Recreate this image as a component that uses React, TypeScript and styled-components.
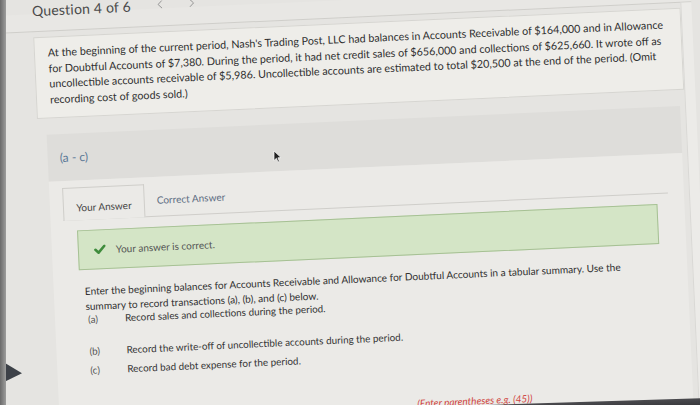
import React from 'react'
import styled, { createGlobalStyle } from 'styled-components'
import { ChevronLeft, ChevronRight } from 'lucide-react'

const GlobalStyle = createGlobalStyle`
  html, body {
    margin: 0;
    padding: 0;
  }

  body {
    background: #e4e3e0;
    font-family: Lato, "Open Sans", "Liberation Sans", sans-serif;
    color: #333;
  }
`

const Screen = styled.div`
  position: relative;
  display: flex;
  width: 700px;
  height: 405px;
  overflow: hidden;
  background: #e5e4e1;
`

const Bezel = styled.div`
  flex: none;
  width: 6px;
  background: linear-gradient(to right, #6a6a6a, #9d9d9c);
  z-index: 2;
`

// the photo is taken slightly askew, so the whole page is tilted a little
const Stage = styled.div`
  flex: 1;
  display: flex;
  flex-direction: column;
  transform: rotate(-2.6deg);
  transform-origin: 344px 202px;
`

const Header = styled.div`
  flex: none;
  display: flex;
  align-items: flex-start;
  height: 17px;
  padding-left: 35px;
  border-bottom: 1px solid #cfceca;
  background: #e8e7e4;
`

const Title = styled.div`
  margin-top: -12px;
  font-size: 14px;
  line-height: 18px;
  color: #4a4a4a;
  letter-spacing: 0.2px;
`

const Nav = styled.div`
  display: flex;
  gap: 18px;
  margin-top: -11px;
  margin-left: 22px;
  color: #8c8c8c;
`

const Body = styled.div`
  flex: none;
  display: flex;
`

const Gutter = styled.div`
  flex: none;
  width: 35px;
`

const Main = styled.div`
  flex: none;
  width: 648px;
  display: flex;
  flex-direction: column;
`

const RightStrip = styled.div`
  flex: 1;
  border-left: 1px solid #d9d8d5;
  background: #ecebe8;
`

const QuestionCard = styled.div`
  margin-top: 5px;
  padding: 7px 0 11px 13px;
  background: #eeede9;
  border: 1px solid #d6d5d1;
`

const QuestionLine = styled.div`
  font-size: 10.75px;
  line-height: 15.5px;
  white-space: nowrap;
  color: #2f2f2f;
`

const Panel = styled.div`
  display: flex;
  flex-direction: column;
  margin: 16px 5px 0 9px;
`

const PanelHead = styled.div`
  display: flex;
  align-items: center;
  height: 47px;
  padding-left: 12px;
  background: #dedddA;
  font-size: 12px;
  color: #5b7896;
`

const PanelBody = styled.div`
  padding: 7px 16px 20px 13px;
  background: #ebeae7;
`

const TabList = styled.div`
  display: flex;
  height: 32px;
  border-bottom: 1px solid #cfceca;
`

const Tab = styled.div<{ $active?: boolean }>`
  display: flex;
  align-items: center;
  font-size: 10px;
  ${(p) =>
    p.$active
      ? `
    justify-content: center;
    width: 80px;
    margin-bottom: -1px;
    padding-top: 6px;
    border: 1px solid #cfceca;
    border-bottom: none;
    background: #ebeae7;
    color: #454545;
  `
      : `
    padding-left: 12px;
    color: #5d6d82;
  `}
`

const Content = styled.div`
  padding: 0 11px 0 13px;
`

const Notice = styled.div`
  display: flex;
  align-items: center;
  gap: 10px;
  height: 38px;
  margin-top: 10px;
  padding-left: 15px;
  border: 1px solid #a6c094;
  background: #d4e5c6;
  font-size: 10px;
  color: #555;
`

const Instructions = styled.div`
  margin-top: 14px;
  padding-left: 5px;
  font-size: 10.1px;
  line-height: 15px;
  white-space: nowrap;
  color: #303030;
`

const Item = styled.div<{ $gap: number }>`
  display: grid;
  grid-template-columns: 37px 1fr;
  margin-top: ${(p) => p.$gap}px;
  padding-left: 7px;
  font-size: 9.9px;
  line-height: 14px;
  white-space: nowrap;
  color: #333;
`

const Label = styled.span`
  color: #555;
`

const Hint = styled.div`
  margin-top: 34px;
  margin-left: 332px;
  font-size: 10px;
  line-height: 14px;
  font-style: italic;
  color: #d0453e;
  white-space: nowrap;
`

const Cursor = styled.svg`
  position: absolute;
  left: 273px;
  top: 150px;
`

const DeskEdge = styled.div`
  position: absolute;
  right: -10px;
  bottom: -10px;
  width: 250px;
  height: 17px;
  background: linear-gradient(to bottom, #4a4a4e, #1f1f22);
  transform: rotate(-1.8deg);
  transform-origin: right bottom;
`

const CornerShadow = styled.div`
  position: absolute;
  left: 0;
  top: 360px;
  width: 22px;
  height: 24px;
  background: #3d4148;
  clip-path: polygon(0 0, 100% 55%, 0 100%);
`

const question = [
  "At the beginning of the current period, Nash's Trading Post, LLC had balances in Accounts Receivable of $164,000 and in Allowance",
  'for Doubtful Accounts of $7,380. During the period, it had net credit sales of $656,000 and collections of $625,660. It wrote off as',
  'uncollectible accounts receivable of $5,986. Uncollectible accounts are estimated to total $20,500 at the end of the period. (Omit',
  'recording cost of goods sold.)',
]

const items = [
  { label: '(a)', text: 'Record sales and collections during the period.', gap: -2 },
  { label: '(b)', text: 'Record the write-off of uncollectible accounts during the period.', gap: 18 },
  { label: '(c)', text: 'Record bad debt expense for the period.', gap: 5 },
]

function CheckMark() {
  return (
    <svg width="12" height="10" viewBox="0 0 12 10">
      <path d="M1.5 5.2 L4.6 8.2 L10.6 1.6" fill="none" stroke="#3f8c3c" strokeWidth="2.6" strokeLinecap="round" strokeLinejoin="round" />
    </svg>
  )
}

export default function App() {
  return (
    <Screen>
      <GlobalStyle />
      <Bezel />
      <Stage>
        <Header>
          <Title>Question 4 of 6</Title>
          <Nav>
            <ChevronLeft size={14} strokeWidth={1.5} />
            <ChevronRight size={14} strokeWidth={1.5} />
          </Nav>
        </Header>
        <Body>
          <Gutter />
          <Main>
            <QuestionCard>
              {question.map((line) => (
                <QuestionLine key={line}>{line}</QuestionLine>
              ))}
            </QuestionCard>
            <Panel>
              <PanelHead>(a - c)</PanelHead>
              <PanelBody>
                <TabList>
                  <Tab $active>Your Answer</Tab>
                  <Tab>Correct Answer</Tab>
                </TabList>
                <Content>
                  <Notice>
                    <CheckMark />
                    Your answer is correct.
                  </Notice>
                  <Instructions>
                    Enter the beginning balances for Accounts Receivable and Allowance for Doubtful Accounts in a tabular summary. Use the
                    <br />
                    summary to record transactions (a), (b), and (c) below.
                  </Instructions>
                  {items.map((item) => (
                    <Item key={item.label} $gap={item.gap}>
                      <Label>{item.label}</Label>
                      <span>{item.text}</span>
                    </Item>
                  ))}
                  <Hint>(Enter parentheses e.g. (45))</Hint>
                </Content>
              </PanelBody>
            </Panel>
          </Main>
          <RightStrip />
        </Body>
      </Stage>
      <Cursor width="9" height="13" viewBox="0 0 9 13">
        <path d="M1 1 L1 10.5 L3.4 8.3 L5 12 L6.4 11.4 L4.9 7.8 L8 7.6 Z" fill="#222" stroke="#fff" strokeWidth="0.7" />
      </Cursor>
      <CornerShadow />
      <DeskEdge />
    </Screen>
  )
}
